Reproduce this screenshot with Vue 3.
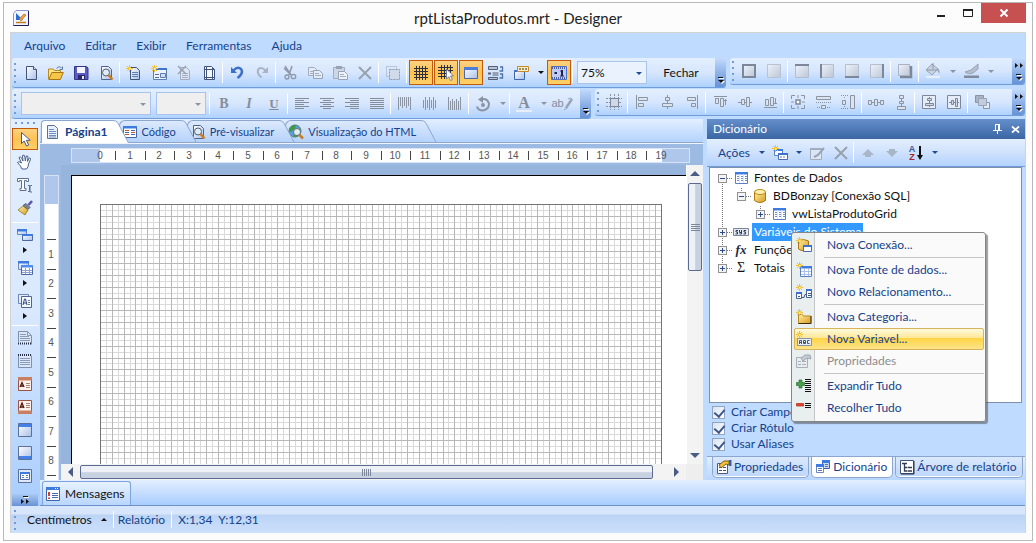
<script setup>
const fileTools = [
  { i: 'new', l: 'Novo' }, { i: 'open', l: 'Abrir' }, { i: 'save', l: 'Salvar' }, { i: 'preview', l: 'Visualizar' }, { t: 'sep' },
  { i: 'newpage', l: 'Nova página' }, { i: 'newform', l: 'Novo formulário' }, { i: 'delpage', l: 'Excluir página' }, { i: 'setup', l: 'Configurar página' }, { t: 'sep' },
  { i: 'undo', l: 'Desfazer' }, { i: 'redo', l: 'Refazer' }, { t: 'sep' },
  { i: 'cut', l: 'Recortar' }, { i: 'copy', l: 'Copiar' }, { i: 'paste', l: 'Colar' }, { i: 'del', l: 'Excluir' }, { t: 'sep' },
  { i: 'selall', l: 'Selecionar tudo' }, { t: 'sep' },
  { i: 'grid', l: 'Grade', on: true }, { i: 'snap', l: 'Alinhar à grade', on: true }, { i: 'window', l: 'Cabeçalhos', on: true },
  { i: 'order', l: 'Ordem' }, { i: 'tag', l: 'Exibição', drop: true }, { i: 'ruler', l: 'Réguas', on: true }, { t: 'sep' }
]
const borderTools = [
  { i: 'b-all', l: 'Todas as bordas' }, { i: 'b-none', l: 'Sem bordas' }, { t: 'sep' },
  { i: 'b-top', l: 'Borda superior' }, { i: 'b-left', l: 'Borda esquerda' }, { i: 'b-bottom', l: 'Borda inferior' }, { i: 'b-right', l: 'Borda direita' }, { t: 'sep' },
  { i: 'b-shadow', l: 'Sombra' }, { t: 'sep' }, { i: 'bucket', l: 'Cor de fundo', drop: true }, { i: 'pen', l: 'Cor da borda', drop: true }
]
const textTools = [
  { t: 'sep' }, { g: 'B', i: 'bold', l: 'Negrito' }, { g: 'I', i: 'italic', l: 'Itálico' }, { g: 'U', i: 'under', l: 'Sublinhado' }, { t: 'sep' },
  { i: 'al-left', l: 'Esquerda' }, { i: 'al-center', l: 'Centro' }, { i: 'al-right', l: 'Direita' }, { i: 'al-just', l: 'Justificar' }, { t: 'sep' },
  { i: 'va-top', l: 'Topo' }, { i: 'va-mid', l: 'Meio' }, { i: 'va-bot', l: 'Base' }, { t: 'sep' },
  { i: 'rotate', l: 'Rotação', drop: true }, { t: 'sep' }, { g: 'A', i: 'fontcolor', l: 'Cor do texto', drop: true }, { g: 'ab', i: 'format', l: 'Formato', after: 'quill' }
]
const layoutTools = [
  { i: 'l-grid', l: 'Ajustar à grade' }, { t: 'sep' },
  { i: 'l-left', l: 'Alinhar à esquerda' }, { i: 'l-center', l: 'Centralizar' }, { i: 'l-right', l: 'Alinhar à direita' }, { t: 'sep' },
  { i: 'l-top', l: 'Alinhar topo' }, { i: 'l-mid', l: 'Alinhar meio' }, { i: 'l-bot', l: 'Alinhar base' }, { t: 'sep' },
  { i: 'l-size', l: 'Mesmo tamanho' }, { i: 'l-width', l: 'Mesma largura' }, { i: 'l-height', l: 'Mesma altura' }, { t: 'sep' },
  { i: 'l-hsp', l: 'Espaço horizontal' }, { i: 'l-vsp', l: 'Espaço vertical' }, { t: 'sep' },
  { i: 'l-hc', l: 'Centro horizontal' }, { i: 'l-vc', l: 'Centro vertical' }, { t: 'sep' }, { i: 'l-front', l: 'Trazer para frente' }
]
const boxTools = [
  { i: 'cursor', l: 'Selecionar', on: true }, { i: 'hand', l: 'Mover' }, { i: 'text', l: 'Texto' }, { i: 'brush', l: 'Copiar estilo' }, { t: 'sep' },
  { i: 'bands', l: 'Bandas', drop: true }, { i: 'cross', l: 'Bandas cruzadas', drop: true }, { i: 'comps', l: 'Componentes', drop: true }, { t: 'sep' },
  { i: 'k-title', l: 'Título' }, { i: 'k-sum', l: 'Resumo' }, { i: 'k-phead', l: 'Cabeçalho de página' }, { i: 'k-pfoot', l: 'Rodapé de página' },
  { i: 'k-head', l: 'Cabeçalho' }, { i: 'k-foot', l: 'Rodapé' }, { i: 'k-data', l: 'Dados' }
]
const menus = ['Arquivo', 'Editar', 'Exibir', 'Ferramentas', 'Ajuda']
const tabs = [
  { i: 'doc', l: 'Página1', on: true }, { i: 'code', l: 'Código' }, { i: 'preview', l: 'Pré-visualizar' }, { i: 'globe', l: 'Visualização do HTML' }
]
const tree = [
  { d: 0, open: true, i: 'table', l: 'Fontes de Dados' },
  { d: 1, open: true, i: 'db', l: 'BDBonzay [Conexão SQL]' },
  { d: 2, i: 'table', l: 'vwListaProdutoGrid' },
  { d: 0, i: 'sys', l: 'Variáveis do Sistema', sel: true },
  { d: 0, i: 'fx', g: 'fx', l: 'Funções' },
  { d: 0, i: 'sigma', g: 'Σ', l: 'Totais' }
]
const context = [
  { i: 'n-conn', l: 'Nova Conexão...' }, { t: 'sep' },
  { i: 'n-table', l: 'Nova Fonte de dados...' }, { i: 'n-rel', l: 'Novo Relacionamento...' }, { t: 'sep' },
  { i: 'n-cat', l: 'Nova Categoria...' }, { i: 'n-var', l: 'Nova Variavel...', on: true }, { i: 'props-off', l: 'Propriedades', off: true }, { t: 'sep' },
  { i: 'expand', l: 'Expandir Tudo' }, { i: 'collapse', l: 'Recolher Tudo' }
]
const options = ['Criar Campo', 'Criar Rótulo', 'Usar Aliases']
const dockTabs = [
  { i: 'props', l: 'Propriedades' }, { i: 'dict', l: 'Dicionário', on: true }, { i: 'tree', l: 'Árvore de relatório' }
]

const cm = 561 / 19
const hMarks = Array.from({ length: 20 }, (_, n) => ({ n, x: 29 + Math.round(n * cm) }))
const vMarks = Array.from({ length: 8 }, (_, n) => ({ n: n + 1, y: 50 + Math.round((n + 1) * cm) }))
const steps = (count) => Array.from({ length: count }, (_, n) => ({ p: Math.round((n + 1) * cm / 5), dark: n % 2 === 1 }))
const cols = steps(94)
const rows = steps(250)
</script>

<template>
  <svg class="defs" aria-hidden="true">
    <defs>
      <linearGradient id="gBlue" x1="0" y1="0" x2="1" y2="1"><stop offset="0" stop-color="#fff" /><stop offset="1" stop-color="#a9c0e8" /></linearGradient>
      <linearGradient id="gGray" x1="0" y1="0" x2="1" y2="1"><stop offset="0" stop-color="#eef3fb" /><stop offset="1" stop-color="#bcc6d6" /></linearGradient>
      <linearGradient id="gGold" x1="0" y1="0" x2="1" y2="1"><stop offset="0" stop-color="#fff0a8" /><stop offset="1" stop-color="#d79a1c" /></linearGradient>
      <linearGradient id="gTab" x1="0" y1="0" x2="0" y2="1"><stop offset="0" stop-color="#dce9fc" /><stop offset="1" stop-color="#b5d2fb" /></linearGradient>
    </defs>
    <g id="spark"><path d="M3.500 0v7M0 3.500h7M1 1l5 5M6 1l-5 5" stroke="#f0c030" /><path d="M3 3h1.500v1.500h-1.500z" fill="#fffbd8" /></g>
    <symbol id="logo" viewBox="0 0 16 16"><path d="M3 .5h12.500v15h-15v-12z" fill="#f4f6fd" stroke="#8c93cc" /><path d="M15.500 1v14.500h-15" fill="none" stroke="#1d1b5c" /><path d="M3 3v7h7z" fill="#2b6fd4" /><path d="M6 9l5-5 2 1-5 6z" fill="#f0a040" stroke="#a85c10" stroke-width=".6" /><path d="M3 12.500h10" stroke="#c07818" stroke-width="1.500" /></symbol>
    <symbol id="new" viewBox="0 0 16 16"><path d="M3.500 1.500h7l3 3v10h-10z" fill="url(#gBlue)" stroke="#41557c" /><path d="M10.500 1.500v3h3" fill="#dfe7f5" stroke="#41557c" /></symbol>
    <symbol id="open" viewBox="0 0 16 16"><path d="M.5 14v-10h5l1 1.500h6v3" fill="#fbe58c" stroke="#b98a1e" /><path d="M.8 14.500l3-7h11.500l-3 7z" fill="#f6c648" stroke="#a87612" /><path d="M8.500 3.500q3-3.500 5.500 0M14.500 1.500v3h-3" fill="none" stroke="#5f7ba8" /></symbol>
    <symbol id="save" viewBox="0 0 16 16"><path d="M1.500 1.500h12l1.500 1.500v11.500h-13.500z" fill="#5a5bc4" stroke="#34358e" /><path d="M4 2h8v6h-8z" fill="#f1f4fe" /><path d="M5 10h7v4.500h-7z" fill="#2a2a66" /><path d="M9 11h2v3h-2z" fill="#e8ecfa" /></symbol>
    <symbol id="preview" viewBox="0 0 16 16"><path d="M3.500 1.500h7l3 3v10h-10z" fill="url(#gBlue)" stroke="#51658c" /><circle cx="8" cy="7.500" r="3.500" fill="#dcecfa" stroke="#555f6e" /><path d="M10.500 10l4 4.500" stroke="#d17a1c" stroke-width="2.500" /></symbol>
    <symbol id="newpage" viewBox="0 0 16 16"><path d="M4.500 2.500h6l3 3v9h-9z" fill="url(#gBlue)" stroke="#41557c" /><path d="M6 7.500h6M6 9.500h6M6 11.500h6" stroke="#5d7fb4" /><use href="#spark" /></symbol>
    <symbol id="newform" viewBox="0 0 16 16"><path d="M2.500 3.500h13v11h-13z" fill="#eef4fe" stroke="#5d7fb4" /><path d="M2 3h14v2h-14z" fill="#3f73cc" /><path d="M4 9.500h4M4 12.500h4" stroke="#5d6f94" /><path d="M9.500 8.500h5v4h-5z" fill="#cfdff8" stroke="#5d7fb4" /><use href="#spark" /></symbol>
    <symbol id="delpage" viewBox="0 0 16 16"><path d="M4.500 2.500h6l3 3v9h-9z" fill="#dce6f4" stroke="#a2adbf" /><path d="M6 8.500h6M6 10.500h6M6 12.500h6" stroke="#a2adbf" /><path d="M2 1l8 8M10 1l-8 8" stroke="#98a2b2" stroke-width="1.500" /></symbol>
    <symbol id="setup" viewBox="0 0 16 16"><path d="M3.500 1.500h7l3 3v10h-10z" fill="#f4f8fe" stroke="#41557c" /><path d="M5.500 1.500v13M11.500 2v12.500M3.500 4.500h10M3.500 12.500h10" stroke="#41557c" /></symbol>
    <symbol id="undo" viewBox="0 0 16 16"><path d="M2 2v6h6z" fill="#3d70cb" /><path d="M4.500 5.500q4-4.500 7.500-1.500 3 4-3.500 9" fill="none" stroke="#3d70cb" stroke-width="2.500" /></symbol>
    <symbol id="redo" viewBox="0 0 16 16"><path d="M14 2v6h-6z" fill="#a9b3c3" /><path d="M11.500 5.500q-4-4-7-1.500-2.500 4 3 8.500" fill="none" stroke="#a9b3c3" stroke-width="2" /></symbol>
    <symbol id="cut" viewBox="0 0 16 16"><path d="M3 1l6 9M10 1l-3 9M2 3l5 5" stroke="#8d98aa" stroke-width="1.500" /><circle cx="5" cy="12" r="2" fill="none" stroke="#8d98aa" stroke-width="1.300" /><circle cx="11.500" cy="11.500" r="2.200" fill="none" stroke="#8d98aa" stroke-width="1.300" /></symbol>
    <symbol id="copy" viewBox="0 0 16 16"><path d="M1.500 2.500h6l2 2v6h-8z" fill="#e3ebf8" stroke="#a2adbf" /><path d="M3 6.500h4M3 8.500h4" stroke="#a2adbf" /><path d="M6.500 5.500h6l3 3v5h-9z" fill="#e3ebf8" stroke="#98a3b5" /><path d="M8 8.500h4M8 10.500h6" stroke="#a2adbf" /></symbol>
    <symbol id="paste" viewBox="0 0 16 16"><path d="M1.500 2.500h11v11h-11z" fill="#ccd6e4" stroke="#a2adbf" /><path d="M4 1h6v3h-6z" fill="#98a3b5" /><path d="M6.500 6.500h6l3 3v5h-9z" fill="#edf2fa" stroke="#98a3b5" /><path d="M8 9.500h4M8 11.500h6" stroke="#a2adbf" /></symbol>
    <symbol id="del" viewBox="0 0 16 16"><path d="M2 2l12 12M14 2l-12 12" stroke="#98a1ae" stroke-width="2" /></symbol>
    <symbol id="selall" viewBox="0 0 16 16"><path d="M1.500 1.500h10v10h-10z" fill="none" stroke="#9aa4b5" stroke-dasharray="1 1" /><path d="M4.500 4.500h10v10h-10z" fill="#d0dae8" stroke="#8d98aa" stroke-dasharray="2 1" /></symbol>
    <symbol id="grid" viewBox="0 0 16 16"><path d="M3.500 1v14M6.500 1v14M9.500 1v14M12.500 1v14M1 3.500h14M1 6.500h14M1 9.500h14M1 12.500h14" stroke="#2c2f38" /></symbol>
    <symbol id="snap" viewBox="0 0 16 16"><path d="M3.500 0v14M6.500 0v14M9.500 0v8M12.500 0v8M0 2.500h15M0 5.500h15M0 8.500h9M0 11.500h8" stroke="#2c2f38" /><path d="M8.500 4v10l2.300-2.300 1.700 3.800 1.800-1-1.800-3.500h3z" fill="#fff" stroke="#5a6b90" stroke-width=".8" /></symbol>
    <symbol id="window" viewBox="0 0 16 16"><path d="M1.500 2.500h13v11h-13z" fill="url(#gBlue)" stroke="#4d68a4" /><path d="M1 2h14v3h-14z" fill="#4a7ce0" /></symbol>
    <symbol id="order" viewBox="0 0 16 16"><path d="M.5 1.500h9v3h-9z" fill="#b9c4d8" stroke="#555f73" /><path d="M4.500 8h6M4.500 10h6" stroke="#555f73" /><path d="M0 7.500h3v2h-3z" fill="#555f73" /><path d="M.5 12.500h9v2h-9z" fill="#b9c4d8" stroke="#555f73" /><path d="M12 2h2.500v4h-3M12 9h2.500v4h-3" fill="none" stroke="#4a6fae" stroke-width="1.300" /></symbol>
    <symbol id="tag" viewBox="0 0 16 16"><path d="M1.500 5.500h10v9h-10z" fill="url(#gBlue)" stroke="#3e66ad" /><path d="M1 5h11v2h-11z" fill="#3f73cc" /><path d="M4.500 1.500h11v5h-11z" fill="#fdf0c6" stroke="#c58b2a" /><path d="M6 4h2M9 4h2M12 4h2" stroke="#7a6a4a" stroke-width="1.500" /></symbol>
    <symbol id="ruler" viewBox="0 0 16 16"><path d="M.5 1.500h15v13h-15z" fill="#bccbf8" stroke="#4a72cc" /><path d="M1 3h14M1 13h14" stroke="#52629c" stroke-width="2" stroke-dasharray="1 1" /><path d="M3.500 7h2.500v2h-2.500zM10 5h2v5.500h1v1h-4v-1h1v-4h-1z" fill="#1d2450" /></symbol>
    <symbol id="b-all" viewBox="0 0 16 16"><path d="M2 2h12v12h-12z" fill="url(#gGray)" stroke="#7d879a" stroke-width="2" /></symbol>
    <symbol id="b-none" viewBox="0 0 16 16"><path d="M1.500 1.500h13v13h-13z" fill="url(#gGray)" stroke="#b9c3d3" /></symbol>
    <symbol id="b-top" viewBox="0 0 16 16"><path d="M1.500 2.500h13v12h-13z" fill="url(#gGray)" stroke="#b4bece" /><path d="M1 2h14" stroke="#7d879a" stroke-width="2" /></symbol>
    <symbol id="b-left" viewBox="0 0 16 16"><path d="M1.500 1.500h13v13h-13z" fill="url(#gGray)" stroke="#b4bece" /><path d="M2 1v14" stroke="#7d879a" stroke-width="2" /></symbol>
    <symbol id="b-bottom" viewBox="0 0 16 16"><path d="M1.500 1.500h13v12h-13z" fill="url(#gGray)" stroke="#b4bece" /><path d="M1 14h14" stroke="#7d879a" stroke-width="2" /></symbol>
    <symbol id="b-right" viewBox="0 0 16 16"><path d="M1.500 1.500h13v13h-13z" fill="url(#gGray)" stroke="#b4bece" /><path d="M14 1v14" stroke="#7d879a" stroke-width="2" /></symbol>
    <symbol id="b-shadow" viewBox="0 0 16 16"><path d="M3 14h11v-11" fill="none" stroke="#7d879a" stroke-width="2.500" /><path d="M1.500 1.500h11v11h-11z" fill="url(#gGray)" stroke="#aab4c5" /></symbol>
    <symbol id="bucket" viewBox="0 0 16 16"><path d="M7 1l6 5-6 6-6-5z" fill="#c9d2e0" stroke="#98a3b5" /><path d="M2 7h10M8 0v6" stroke="#8d98aa" /><path d="M12 5q3 1 2.500 6l-2-3z" fill="#98a3b5" /><path d="M1 13h14v2h-14z" fill="#e8eef8" /></symbol>
    <symbol id="pen" viewBox="0 0 16 16"><path d="M15 1l-7 6-6 2q3 3 8 1l5-4z" fill="#b5bfcf" stroke="#98a3b5" /><path d="M1 12.500h15v2.500h-15z" fill="#7f8a9c" /></symbol>
    <symbol id="al-left" viewBox="0 0 16 16"><path d="M1 2.500h14M1 4.500h9M1 6.500h14M1 8.500h9M1 10.500h14M1 12.500h9" stroke="#858d9b" /></symbol>
    <symbol id="al-center" viewBox="0 0 16 16"><path d="M1 2.500h14M4 4.500h8M1 6.500h14M4 8.500h8M1 10.500h14M4 12.500h8" stroke="#858d9b" /></symbol>
    <symbol id="al-right" viewBox="0 0 16 16"><path d="M1 2.500h14M6 4.500h9M1 6.500h14M6 8.500h9M1 10.500h14M6 12.500h9" stroke="#858d9b" /></symbol>
    <symbol id="al-just" viewBox="0 0 16 16"><path d="M1 2.500h14M1 4.500h14M1 6.500h14M1 8.500h14M1 10.500h14M1 12.500h14" stroke="#858d9b" /></symbol>
    <symbol id="va-top" viewBox="0 0 16 16"><path d="M1.500 1v13M3.500 1v9M5.500 1v11M7.500 1v9M9.500 1v11M11.500 1v9M13.500 1v13" stroke="#8b94a3" /></symbol>
    <symbol id="va-mid" viewBox="0 0 16 16"><path d="M1.500 4v8M3.500 1v13M5.500 4v8M7.500 1v13M9.500 4v8M11.500 1v13M13.500 4v8" stroke="#8b94a3" /></symbol>
    <symbol id="va-bot" viewBox="0 0 16 16"><path d="M1.500 1v13M3.500 5v9M5.500 3v11M7.500 5v9M9.500 3v11M11.500 5v9M13.500 1v13" stroke="#8b94a3" /></symbol>
    <symbol id="rotate" viewBox="0 0 16 16"><path d="M6 3.500q6-2 8 4 0 6-6 7-5 0-6-4" fill="none" stroke="#8b94a3" stroke-width="2" /><path d="M8 0v7l-5-3.500z" fill="#8b94a3" /><circle cx="8" cy="9" r="2" fill="#8b94a3" /></symbol>
    <symbol id="quill" viewBox="0 0 9 16"><path d="M8 3l-6 9" stroke="#98a3b5" stroke-width="2.500" /><path d="M0 14l3-2M4 3q3-2 4 0" stroke="#98a3b5" fill="none" /></symbol>
    <symbol id="l-grid" viewBox="0 0 16 16"><path d="M4.500 0v16M8.500 0v4M8.500 12v4M12.500 0v16M0 4.500h16M0 8.500h4M13 8.500h3M0 12.500h16" stroke="#8b94a3" stroke-dasharray="2 1" /><path d="M4.500 4.500h8v8h-8z" fill="#cfd8e6" stroke="#7d8799" /></symbol>
    <symbol id="l-left" viewBox="0 0 16 16"><path d="M2.500 1v14" stroke="#8b94a3" /><path d="M4.500 3.500h9v3h-9zM4.500 9.500h5v3h-5z" fill="#dbe3ef" stroke="#8b94a3" /></symbol>
    <symbol id="l-center" viewBox="0 0 16 16"><path d="M8.500 1v14" stroke="#8b94a3" /><path d="M6.500 3.500h4v3h-4zM3.500 9.500h10v3h-10z" fill="#dbe3ef" stroke="#8b94a3" /></symbol>
    <symbol id="l-right" viewBox="0 0 16 16"><path d="M13.500 1v14" stroke="#8b94a3" /><path d="M3.500 3.500h8v3h-8zM7.500 9.500h4v3h-4z" fill="#dbe3ef" stroke="#8b94a3" /></symbol>
    <symbol id="l-top" viewBox="0 0 16 16"><path d="M2 2.500h13M13.500 5v6M12 6.500h3" stroke="#8b94a3" /><path d="M3.500 4.500h3v5h-3zM8.500 4.500h3v8h-3z" fill="#dbe3ef" stroke="#8b94a3" /></symbol>
    <symbol id="l-mid" viewBox="0 0 16 16"><path d="M1 8.500h14" stroke="#8b94a3" /><path d="M4.500 5.500h3v5h-3zM9.500 3.500h3v9h-3z" fill="#dbe3ef" stroke="#8b94a3" /></symbol>
    <symbol id="l-bot" viewBox="0 0 16 16"><path d="M2 13.500h13M13.500 4v6M12 9.500h3" stroke="#8b94a3" /><path d="M3.500 5.500h3v6h-3zM8.500 3.500h3v8h-3z" fill="#dbe3ef" stroke="#8b94a3" /></symbol>
    <symbol id="l-size" viewBox="0 0 16 16"><path d="M5 1.500h-3.500v3.500M11 1.500h3.500v3.500M5 14.500h-3.500v-3.500M11 14.500h3.500v-3.500M1 8h3M12 8h3M8 1v3M8 12v3" fill="none" stroke="#8b94a3" /><path d="M6 6h4v4h-4z" fill="#fff" stroke="#7d8799" stroke-width="1.500" /></symbol>
    <symbol id="l-width" viewBox="0 0 16 16"><path d="M1.500 2.500h14v3h-14zM6.500 11.500h4v3h-4z" fill="#dbe3ef" stroke="#8b94a3" /><path d="M1 8.500h15M2 13.500h3M12 13.500h3" stroke="#8b94a3" stroke-dasharray="1 1" /></symbol>
    <symbol id="l-height" viewBox="0 0 16 16"><path d="M10.500 1.500h4v13h-4zM2.500 6.500h3v4h-3z" fill="#dbe3ef" stroke="#8b94a3" /><path d="M1 1.500h8M1 14.500h8M4.500 3v2M4.500 12v2" stroke="#8b94a3" stroke-dasharray="1 1" /></symbol>
    <symbol id="l-hsp" viewBox="0 0 16 16"><path d="M.5 6.500h3v4h-3zM6.500 5.500h3v6h-3zM12.500 6.500h3v4h-3z" fill="#dbe3ef" stroke="#8b94a3" /><path d="M4 8.500h2M10 8.500h2" stroke="#8b94a3" /></symbol>
    <symbol id="l-vsp" viewBox="0 0 16 16"><path d="M6.500 1.500h4v3h-4zM4.500 12.500h8v3h-8zM6.500 7.500h4v2h-4z" fill="#dbe3ef" stroke="#8b94a3" /><path d="M8.500 5v2M8.500 10v2" stroke="#8b94a3" /></symbol>
    <symbol id="l-hc" viewBox="0 0 16 16"><path d="M1.500 1.500h13v13h-13z" fill="#e4ecf8" stroke="#7d8799" /><path d="M8.500 3v10" stroke="#7d8799" /><path d="M6.500 4.500h4v2h-4zM4.500 9.500h8v2h-8z" fill="#cfd8e6" stroke="#7d8799" /></symbol>
    <symbol id="l-vc" viewBox="0 0 16 16"><path d="M1.500 1.500h13v13h-13z" fill="#e4ecf8" stroke="#7d8799" /><path d="M3 8.500h10" stroke="#7d8799" /><path d="M5.500 6.500v4h2v-4zM9.500 4.500v8h2v-8z" fill="#cfd8e6" stroke="#7d8799" /></symbol>
    <symbol id="l-front" viewBox="0 0 16 16"><path d="M1.500 1.500h8v7h-8z" fill="#a9b3c3" stroke="#8b94a3" /><path d="M9.500 8.500h6v6h-6z" fill="#e4ecf8" stroke="#8b94a3" /><path d="M4.500 4.500h8v7h-8z" fill="#c3ccda" stroke="#98a3b5" /></symbol>
    <symbol id="cursor" viewBox="0 0 16 16"><path d="M4.500 1.500v11l2.700-2.500 2.300 5 2.200-1-2.300-4.700h3.800z" fill="#fff" stroke="#4a5a80" /></symbol>
    <symbol id="hand" viewBox="0 0 16 16"><path d="M5 15q-1-3-4.500-6.500 1-2 4 .5l-2.500-5.500q1.500-1.500 2.500.5l1.500 3-.5-5.500q2-1 2.200.5l.6 5 1-5q1.700-.5 1.700 1l-.6 4.500 2-3.500q1.600 0 1.100 1.500l-2 4.500q0 3-2 5z" fill="#fff" stroke="#4a5f8c" /></symbol>
    <symbol id="text" viewBox="0 0 16 16"><path d="M.5 1.500h11v3h-2v-1h-2v8h1.500v2h-6v-2h1.500v-8h-2v1h-2z" fill="#fff" stroke="#5c6e94" /><path d="M11 8.500h1.500v6h-1.500M15 8.500h-1.500M13 8v7M15 15h-2" fill="none" stroke="#5c6e94" /></symbol>
    <symbol id="brush" viewBox="0 0 16 16"><path d="M15 1l-3.500 4" stroke="#5b55a8" stroke-width="2.500" /><path d="M9 3.500l4 4-2 2-5-4z" fill="#7d8496" stroke="#596070" /><path d="M6 6l5 4-3 5-7-5z" fill="url(#gGold)" stroke="#7a6a24" stroke-width=".7" /></symbol>
    <symbol id="bands" viewBox="0 0 16 16"><path d="M.5 2.500h9v5h-9z" fill="url(#gBlue)" stroke="#6b87bd" /><path d="M0 2h10v2.500h-10z" fill="#3d7be0" /><path d="M5.500 7.500h10v6h-10z" fill="url(#gBlue)" stroke="#4d68a4" /><path d="M5 7h11v2h-11z" fill="#3d7be0" /></symbol>
    <symbol id="cross" viewBox="0 0 16 16"><path d="M1.500 1.500h10v8h-10z" fill="url(#gBlue)" stroke="#6b87bd" /><path d="M1 1h11v2.500h-11z" fill="#3d7be0" /><path d="M4.500 5.500h11v9h-11z" fill="#fff" stroke="#4d68a4" /><path d="M4 5h12v2.500h-12z" fill="#4f8df0" /><path d="M8.500 8v6M12.500 8v6M5 10.500h10M5 12.500h10" stroke="#8ba3cf" /></symbol>
    <symbol id="comps" viewBox="0 0 16 16"><path d="M1.500 1.500h10v9h-10z" fill="#e6eefb" stroke="#6b87bd" /><path d="M4.500 3.500h10v11h-10z" fill="#f3f7fe" stroke="#51658c" /><path d="M6 12l1.500-6h1l1.500 6M6.500 10h3" stroke="#2e437c" fill="none" /><path d="M11 7.500h2M11 9.500h2M11 11.500h2" stroke="#5d7fb4" /></symbol>
    <symbol id="k-title" viewBox="0 0 16 16"><path d="M1.500 12v-10.500h9l4 4v9" fill="#dce6f6" stroke="#7d90b0" /><path d="M10.500 1.500v4h4M3 4.500h6M3 6.500h9M3 8.500h10M3 10.500h10" fill="none" stroke="#8a9cbb" /><path d="M1 13.500h14" stroke="#26304a" stroke-dasharray="1 1" stroke-width="2" /></symbol>
    <symbol id="k-sum" viewBox="0 0 16 16"><path d="M1.500 2.500v12h13v-12" fill="#dce6f6" stroke="#7d90b0" /><path d="M3 5.500h10M3 7.500h10M3 9.500h10M3 11.500h10" stroke="#8a9cbb" /><path d="M1 2h14" stroke="#26304a" stroke-dasharray="1 1" stroke-width="2" /></symbol>
    <symbol id="k-phead" viewBox="0 0 16 16"><path d="M1.500 1.500h13v13h-13z" fill="#fdf3ee" stroke="#9c5340" /><path d="M1 1h14v3.500h-14z" fill="#c87f62" /><path d="M3 11l2-4.500 2 4.500M3.500 10h3" fill="none" stroke="#4e1b12" stroke-width="1.300" /><path d="M9 7.500h4M9 9.500h4M9 11.500h4" stroke="#b28372" /></symbol>
    <symbol id="k-pfoot" viewBox="0 0 16 16"><path d="M1.500 1.500h13v13h-13z" fill="#fdf3ee" stroke="#9c5340" /><path d="M1 11.500h14v3.500h-14z" fill="#c87f62" /><path d="M3 9l2-5 2 5M3.500 8h3" fill="none" stroke="#4e1b12" stroke-width="1.300" /><path d="M9 4.500h4M9 6.500h4M9 8.500h4" stroke="#b28372" /></symbol>
    <symbol id="k-head" viewBox="0 0 16 16"><path d="M1.500 1.500h13v13h-13z" fill="url(#gBlue)" stroke="#5c7097" /><path d="M2 2h12v3h-12z" fill="#4480e8" /></symbol>
    <symbol id="k-foot" viewBox="0 0 16 16"><path d="M1.500 1.500h13v13h-13z" fill="url(#gBlue)" stroke="#5c7097" /><path d="M2 11h12v3h-12z" fill="#4480e8" /></symbol>
    <symbol id="k-data" viewBox="0 0 16 16"><path d="M1.500 1.500h13v13h-13z" fill="#dde8f8" stroke="#5c7097" /><path d="M3.500 4.500h9v7h-9z" fill="#fff" stroke="#4d68a4" /><path d="M3 4h10v2h-10z" fill="#3d7be0" /><path d="M5 7.500h2M9 7.500h2M5 9.500h2M9 9.500h2" stroke="#5d7fb4" /></symbol>
    <symbol id="doc" viewBox="0 0 16 16"><path d="M3.500 1.500h7l3 3v10h-10z" fill="#e8f0fb" stroke="#5c7097" /><path d="M5 5.500h5M5 7.500h7M5 9.500h7M5 11.500h7M5 13h7" stroke="#6f8fc2" /></symbol>
    <symbol id="code" viewBox="0 0 16 16"><path d="M1.500 2.500h13v11h-13z" fill="#fff" stroke="#3e66ad" /><path d="M1 2h14v2.500h-14z" fill="#3d7be0" /><path d="M3 6.500h4M9 8.500h4M3 10.500h4" stroke="#c8553a" /><path d="M9 6.500h4M3 8.500h4M9 10.500h4" stroke="#4a67b0" /></symbol>
    <symbol id="globe" viewBox="0 0 16 16"><circle cx="7" cy="7" r="6" fill="#5b9de0" stroke="#527a5a" /><path d="M2 4q3-4 6-2.500l-1 3-4 3.500q-2-1-1-4zM5 12l3-3 2 1-2 3z" fill="#3f9a4a" /><circle cx="9" cy="8" r="3.500" fill="#dff0f4" stroke="#607078" /><path d="M11.500 11l3.500 3.500" stroke="#d17a1c" stroke-width="2.500" /></symbol>
    <symbol id="table" viewBox="0 0 16 16"><path d="M2.500 2.500h12v11h-12z" fill="#fff" stroke="#5d7fc0" /><path d="M2 2h13v2.500h-13z" fill="#3d7be0" /><path d="M6.500 4v9M10.500 4v9" stroke="#dbe6f8" /><path d="M4 6.500h2M8 6.500h2M12 6.500h2M4 8.500h2M8 8.500h2M12 8.500h2M4 10.500h2M8 10.500h2M12 10.500h2" stroke="#6d8fcc" /></symbol>
    <symbol id="db" viewBox="0 0 16 16"><path d="M2.500 4v8.500q5.500 4 11 0v-8.500" fill="url(#gGold)" stroke="#a87612" /><ellipse cx="8" cy="4" rx="5.500" ry="2.500" fill="#fdf0b0" stroke="#b98a1e" /></symbol>
    <symbol id="sys" viewBox="0 0 16 16"><path d="M.5 4.500h15v7h-15z" fill="#e4eaf3" stroke="#7b8799" /><path d="M5 6.500h-2v1.500h1.500v2h-2M6.500 6v2.500h2v-2.500M8.500 8v2h-2M13 6.500h-2v1.500h1.500v2h-2" fill="none" stroke="#333c50" /></symbol>
    <symbol id="n-conn" viewBox="0 0 16 16"><path d="M2.500 4v8q5 3.500 10 0v-8q-5-3-10 0" fill="url(#gGold)" stroke="#a87612" /><path d="M7.500 8.500h8v6h-8z" fill="#fff" stroke="#4d6aae" /><path d="M7 8h9v2h-9z" fill="#3d6fd0" /><use href="#spark" /></symbol>
    <symbol id="n-table" viewBox="0 0 16 16"><path d="M4.500 4.500h11v10h-11z" fill="#fff" stroke="#5d7fc0" /><path d="M4 4h12v2.500h-12z" fill="#3d7be0" /><path d="M8.500 7v7M12.500 7v7M5 9.500h10M5 12.500h10" stroke="#a9c0ea" /><use href="#spark" /></symbol>
    <symbol id="n-rel" viewBox="0 0 16 16"><path d="M.5 8.500h5v6h-5zM10.500 5.500h5v8h-5z" fill="#fff" stroke="#41639f" /><path d="M0 8h6v2h-6zM10 5h6v2h-6z" fill="#3d6fd0" /><path d="M6 13.500h2l1-3h1M12 9.500h3M12 11.500h3M2 12.500h2" fill="none" stroke="#41557c" /><use href="#spark" /></symbol>
    <symbol id="n-cat" viewBox="0 0 16 16"><path d="M2.500 14.500v-9h4l1 1.500h7.500v7.500z" fill="url(#gGold)" stroke="#b98a1e" /><path d="M15 7v7.500h-12.500" fill="none" stroke="#3c3010" /><use href="#spark" /></symbol>
    <symbol id="n-var" viewBox="0 0 16 16"><path d="M1.500 7.500h14v7h-14z" fill="#e8eef6" stroke="#8793a8" /><path d="M3.500 13v-3.500h2v3.500M3.500 11.500h2M7.500 9.500v3h2v-3zM7.500 11.500h2M13.500 9.500h-2v3h2" fill="none" stroke="#4a5468" /><use href="#spark" /></symbol>
    <symbol id="props-off" viewBox="0 0 16 16"><path d="M.5 4.500h11v10h-11z" fill="#e8ebef" stroke="#a9afb8" /><path d="M2 8.500h3M6 8.500h4M2 11.500h3M6 11.500h4" stroke="#a9afb8" /><path d="M5 5l4-3h5l1 4-4-1-4 3z" fill="#c6cbd2" stroke="#a0a7b1" /></symbol>
    <symbol id="props" viewBox="0 0 16 16"><path d="M1.500 4.500h10v10h-10z" fill="#fff" stroke="#4f5d78" /><path d="M3 8.500h3M7 8.500h3M3 11.500h3M7 11.500h3" stroke="#41557c" /><path d="M3 6l5-4h5v4l-3-1-5 4z" fill="#f3bd3c" stroke="#7d5c14" /><path d="M13 1h2.500v6h-2.500z" fill="#2e62b8" /></symbol>
    <symbol id="dict" viewBox="0 0 16 16"><path d="M7.500 1.500h7v8h-7z" fill="#c9daf6" stroke="#41639f" /><path d="M7 1h8v3h-8z" fill="#3d7be0" /><path d="M1.500 5.500h7v8h-7z" fill="#fff" stroke="#6b87bd" /><path d="M1 5h8v3h-8z" fill="#3d7be0" /><path d="M3 9.500h4M3 11.500h4M10 5.500h3M10 7.500h3" stroke="#5d76a8" /></symbol>
    <symbol id="tree" viewBox="0 0 16 16"><path d="M1.500 1.500h13v13h-13z" fill="#fff" stroke="#41557c" /><path d="M15 2v13h-13" fill="none" stroke="#26304a" /><path d="M3 4.500h5M5.500 4.500v7.500h3M5.500 8.500h3M9 8.500h4M9 12h4" fill="none" stroke="#333c50" stroke-width="1.300" /></symbol>
    <symbol id="expand" viewBox="0 0 16 16"><path d="M3 2h3v2.500h2.500v3h-2.500v2.500h-3v-2.500h-2.500v-3h2.500z" fill="#4aa04a" stroke="#2d6e34" stroke-width=".7" /><path d="M9 1.500h6M9 3.500h6M9 5.500h6M9 7.500h6M9 9.500h6M9 11.500h6M9 13.500h6" stroke="#111" /></symbol>
    <symbol id="collapse" viewBox="0 0 16 16"><path d="M.5 3.500h7v2.500h-7z" fill="#e8442c" stroke="#b02818" stroke-width=".7" /><path d="M9 3.500h6M9 5.500h6M9 7.500h6" stroke="#111" /></symbol>
    <symbol id="n-dict" viewBox="0 0 16 16"><path d="M2.500 4.500h8v6h-8z" fill="#fff" stroke="#5d7fc0" /><path d="M2 4h9v2h-9z" fill="#3d7be0" /><path d="M6.500 8.500h9v6h-9z" fill="#fff" stroke="#4d6aae" /><path d="M6 8h10v2h-10z" fill="#3d6fd0" /><path d="M8 12h2M11 12h2" stroke="#5d7fc0" /><use href="#spark" /></symbol>
    <symbol id="edit-off" viewBox="0 0 16 16"><path d="M1.500 3.500h11v11h-11z" fill="#dbe6f5" stroke="#a2adbf" /><path d="M1 3h12v2h-12z" fill="#a2adbf" /><path d="M15 3l-6 7-4 2" stroke="#98a3b5" stroke-width="2" fill="none" /></symbol>
    <symbol id="up-off" viewBox="0 0 16 16"><path d="M8 4l6 6h-3v2h-6v-2h-3z" fill="#a9b5c8" /></symbol>
    <symbol id="down-off" viewBox="0 0 16 16"><path d="M8 12l6-6h-3v-2h-6v2h-3z" fill="#a9b5c8" /></symbol>
    <symbol id="msg" viewBox="0 0 16 16"><path d="M1.500 1.500h13v13h-13z" fill="#fff" stroke="#3e66ad" /><path d="M1 1h14v3h-14z" fill="#3d7be0" /><path d="M10 2.500h4" stroke="#fff" stroke-dasharray="1 1" /><path d="M4 6v4M4 11.500v1.500" stroke="#d8402a" stroke-width="2" /><path d="M7 7.500h6M7 9.500h6M7 11.500h6" stroke="#4a67b0" /></symbol>
  </svg>

  <div class="page">
    <div class="frame">
      <header class="title">
        <svg class="ic"><use href="#logo" /></svg>
        <h1>rptListaProdutos.mrt - Designer</h1>
        <div class="winbtns">
          <button aria-label="Minimizar"><svg width="10" height="10"><path d="M1 8h8" stroke="#222" stroke-width="2" /></svg></button>
          <button aria-label="Maximizar"><svg width="10" height="10"><path d="M.5 1.500h9v7h-9z" fill="none" stroke="#222" /><path d="M0 2h10" stroke="#222" stroke-width="2" /></svg></button>
          <button class="close" aria-label="Fechar janela"><svg width="10" height="10"><path d="M1.500 1.500l7 7M8.500 1.500l-7 7" stroke="#fff" stroke-width="2" /></svg></button>
        </div>
      </header>

      <div class="client">
        <nav class="menubar"><button v-for="m in menus" :key="m">{{ m }}</button></nav>

        <div class="bars">
          <div class="bar tall">
            <i class="grip"></i>
            <template v-for="(b, n) in fileTools" :key="n">
              <i v-if="b.t" class="sep"></i>
              <template v-else>
                <button class="tb" :class="{ on: b.on }" :aria-label="b.l"><svg class="ic"><use :href="'#' + b.i" /></svg></button>
                <button v-if="b.drop" class="drop" :aria-label="b.l + ' opções'"><i class="tri"></i></button>
              </template>
            </template>
            <span class="combo zoom"><select aria-label="Zoom"><option>75%</option></select><i class="tri blue"></i></span>
            <button class="fechar">Fechar</button>
            <button class="cap" aria-label="Opções da barra padrão"><i class="line"></i><i class="tri"></i></button>
          </div>
          <div class="bar fill">
            <i class="grip"></i>
            <template v-for="(b, n) in borderTools" :key="n">
              <i v-if="b.t" class="sep"></i>
              <template v-else>
                <button class="tb" :aria-label="b.l"><svg class="ic"><use :href="'#' + b.i" /></svg></button>
                <button v-if="b.drop" class="drop" :aria-label="b.l + ' opções'"><i class="tri gray"></i></button>
              </template>
            </template>
            <button class="cap" aria-label="Mais bordas"><svg class="more" width="8" height="5"><path d="M0 0l3 2.500-3 2.500zM5 0l3 2.500-3 2.500z" /></svg><i class="line"></i><i class="tri"></i></button>
          </div>
        </div>
        <div class="bars">
          <div class="bar tall texts">
            <i class="grip"></i>
            <span class="combo font"><select aria-label="Fonte" disabled><option></option></select><i class="tri gray"></i></span>
            <span class="combo size"><select aria-label="Tamanho" disabled><option></option></select><i class="tri gray"></i></span>
            <template v-for="(b, n) in textTools" :key="n">
              <i v-if="b.t" class="sep"></i>
              <template v-else>
                <button class="tb" :aria-label="b.l">
                  <span v-if="b.g" class="glyph" :class="b.i">{{ b.g }}<svg v-if="b.after" width="9" height="16"><use :href="'#' + b.after" /></svg></span>
                  <svg v-else class="ic"><use :href="'#' + b.i" /></svg>
                </button>
                <button v-if="b.drop" class="drop" :aria-label="b.l + ' opções'"><i class="tri gray"></i></button>
              </template>
            </template>
            <button class="cap" aria-label="Opções de texto"><i class="line"></i><i class="tri"></i></button>
          </div>
          <div class="bar fill">
            <i class="grip"></i>
            <template v-for="(b, n) in layoutTools" :key="n">
              <i v-if="b.t" class="sep"></i>
              <button v-else class="tb" :aria-label="b.l"><svg class="ic"><use :href="'#' + b.i" /></svg></button>
            </template>
            <button class="cap" aria-label="Mais layout"><svg class="more" width="8" height="5"><path d="M0 0l3 2.500-3 2.500zM5 0l3 2.500-3 2.500z" /></svg><i class="line"></i><i class="tri"></i></button>
          </div>
        </div>

        <div class="body">
          <aside class="toolbox">
            <i class="hgrip"></i>
            <template v-for="(b, n) in boxTools" :key="n">
              <i v-if="b.t" class="hsep"></i>
              <button v-else class="kb" :class="{ on: b.on, more: b.drop }" :aria-label="b.l">
                <svg class="ic"><use :href="'#' + b.i" /></svg><i v-if="b.drop" class="side"></i>
              </button>
            </template>
            <button class="boxcap" aria-label="Mais componentes"><i class="line"></i><svg class="more" width="8" height="5"><path d="M0 0l3 2.500-3 2.500zM5 0l3 2.500-3 2.500z" /></svg></button>
          </aside>

          <div class="right">
            <div class="work">
              <main class="center">
                <div class="tabs" role="tablist">
                  <button v-for="(t, n) in tabs" :key="t.l" role="tab" class="tab" :class="{ on: t.on }" :aria-selected="!!t.on" :style="{ zIndex: 9 - n }">
                    <span class="tabmain"><svg class="ic"><use :href="'#' + t.i" /></svg>{{ t.l }}</span>
                    <svg class="tail" width="16" height="23"><path d="M0 .5C4 .5 5 3 6.500 6L15.500 23H0z" :fill="t.on ? '#fff' : 'url(#gTab)'" /><path d="M0 .5C4 .5 5 3 6.500 6L15.500 23" fill="none" stroke="#8ba6cf" /></svg>
                  </button>
                </div>
                <div class="design">
                  <div class="rulerrow">
                    <svg class="hruler" width="619" height="15">
                      <rect width="619" height="15" fill="#d8e4f6" /><rect x="1" y="1" width="617" height="13" fill="#aec7ea" /><rect x="29" y="1" width="562" height="13" fill="#fff" />
                      <g v-for="m in hMarks" :key="m.n">
                        <text :x="m.x" y="11" text-anchor="middle">{{ m.n }}</text>
                        <rect v-if="m.n < 19" :x="m.x + 15" y="3" width="1" height="9" fill="#444" />
                      </g>
                    </svg>
                  </div>
                  <div class="vcol">
                    <svg class="vruler" width="15">
                      <rect width="15" height="1200" fill="#d8e4f6" /><rect x="1" y="1" width="13" height="28" fill="#aec7ea" /><rect x="1" y="29" width="13" height="1170" fill="#fff" />
                      <rect x="3" y="64" width="9" height="1" fill="#444" />
                      <g v-for="m in vMarks" :key="m.n">
                        <text x="7" :y="m.y + 3" text-anchor="middle">{{ m.n }}</text>
                        <rect x="3" :y="m.y + 14" width="9" height="1" fill="#444" />
                      </g>
                    </svg>
                  </div>
                  <div class="canvas">
                    <div class="paper">
                      <svg class="mesh" width="562" shape-rendering="crispEdges">
                        <g v-for="shade in [false, true]" :key="shade">
                          <template v-for="c in cols" :key="'c' + c.p"><rect v-if="c.dark === shade" :x="c.p" y="0" width="1" height="1500" :fill="shade ? '#b8b8b8' : '#dadada'" /></template>
                          <template v-for="r in rows" :key="'r' + r.p"><rect v-if="r.dark === shade" x="0" :y="r.p" width="562" height="1" :fill="shade ? '#b8b8b8' : '#dadada'" /></template>
                        </g>
                        <path d="M.5 1500V.5H561.500V1500" fill="none" stroke="#747474" />
                      </svg>
                    </div>
                  </div>
                  <div class="vscroll">
                    <i class="tri up"></i><div class="vthumb"><i></i></div><i class="tri dn"></i>
                  </div>
                  <div class="hscroll">
                    <i class="lf"></i><div class="hthumb"><i></i></div><i class="side rt"></i>
                  </div>
                  <div class="corner"></div>
                </div>
              </main>

              <section class="panel">
                <header class="ptitle"><h2>Dicionário</h2>
                  <button aria-label="Fixar"><svg width="9" height="10"><path d="M2.500 1v5M6.500 1v5M2 .5h5M0 6.500h9M4.500 7v3M5.500 1v5" stroke="#fff" fill="none" /></svg></button>
                  <button aria-label="Fechar painel"><svg width="9" height="9"><path d="M1 1.500l7 6M8 1.500l-7 6" stroke="#fff" stroke-width="1.800" /></svg></button>
                </header>
                <div class="ptools">
                  <button class="acoes">Ações</button><button class="drop" aria-label="Menu de ações"><i class="tri blue"></i></button>
                  <button class="tb" aria-label="Novo item"><svg class="ic"><use href="#n-dict" /></svg></button><button class="drop" aria-label="Tipos de item"><i class="tri blue"></i></button>
                  <button class="tb" aria-label="Editar item"><svg class="ic"><use href="#edit-off" /></svg></button>
                  <button class="tb" aria-label="Remover item"><svg class="ic"><use href="#del" /></svg></button>
                  <i class="sep"></i>
                  <button class="tb" aria-label="Subir"><svg class="ic"><use href="#up-off" /></svg></button>
                  <button class="tb" aria-label="Descer"><svg class="ic"><use href="#down-off" /></svg></button>
                  <button class="tb az" aria-label="Ordenar"><span class="azl"><b>A</b><b>Z</b></span><svg width="6" height="14"><path d="M2 0h2v9h2l-3 5-3-5h2z" fill="#111" /></svg></button><button class="drop" aria-label="Tipos de ordem"><i class="tri blue"></i></button>
                </div>
                <div class="treebox">
                  <svg class="twigs" width="60" height="110"><path d="M12.500 12v86M31.500 20v8M50.500 38v8" stroke="#777" stroke-dasharray="1 1" /></svg>
                  <ul>
                    <li v-for="r in tree" :key="r.l" :class="'d' + r.d">
                      <button class="exp" :aria-label="(r.open ? 'Recolher ' : 'Expandir ') + r.l"><svg width="9" height="9"><rect x=".5" y=".5" width="8" height="8" fill="#f4f4f4" stroke="#929292" /><path :d="r.open ? 'M2 4.500h5' : 'M2 4.500h5M4.500 2v5'" stroke="#2b4a90" /></svg></button>
                      <i class="dots"></i>
                      <b v-if="r.g" class="ic" :class="r.i">{{ r.g }}</b>
                      <svg v-else class="ic"><use :href="'#' + r.i" /></svg>
                      <span :class="{ sel: r.sel }">{{ r.l }}</span>
                    </li>
                  </ul>
                </div>
                <div class="opts">
                  <label v-for="o in options" :key="o"><input type="checkbox" checked disabled><span>{{ o }}</span></label>
                </div>
                <div class="dock" role="tablist">
                  <button v-for="d in dockTabs" :key="d.l" role="tab" :aria-selected="!!d.on" :class="{ on: d.on }"><svg class="ic"><use :href="'#' + d.i" /></svg>{{ d.l }}</button>
                </div>

                <div class="ctx" role="menu">
                  <template v-for="(c, n) in context" :key="n">
                    <i v-if="c.t" class="csep"></i>
                    <button v-else role="menuitem" :class="{ on: c.on }" :disabled="c.off"><svg class="ic"><use :href="'#' + c.i" /></svg>{{ c.l }}</button>
                  </template>
                </div>
              </section>
            </div>
            <div class="messages"><button><svg class="ic"><use href="#msg" /></svg>Mensagens</button></div>
          </div>
        </div>

        <footer class="status">
          <i class="grip"></i>
          <button class="units">Centímetros<i class="tri up"></i></button>
          <i class="sep"></i><span>Relatório</span><i class="sep"></i><span>X:1,34&nbsp; Y:12,31</span>
        </footer>
      </div>
    </div>
  </div>
</template>

<style>
body { margin: 0; background: #fff; overflow: hidden; }
</style>

<style scoped>
* { box-sizing: border-box; }
.page { height: 100vh; padding: 2px 3px; font: 12px/16px Lato, "Open Sans", sans-serif; color: #15428b; }
button { font: inherit; color: inherit; background: none; border: 0; padding: 0; margin: 0; flex: none; white-space: nowrap; }
i { font-style: normal; flex: none; }
.defs { position: absolute; width: 0; height: 0; }
.ic { width: 16px; height: 16px; display: block; flex: none; }
.frame { height: 100%; border: 1px solid #b9b9b9; background: #fcfcfc; padding: 0 6px 7px; display: flex; flex-direction: column; }
.title { height: 29px; flex: none; display: flex; align-items: center; padding-left: 3px; }
.title h1 { flex: 1; margin: 0; text-align: center; font-size: 15px; line-height: 20px; font-weight: 400; color: #222; padding-left: 80px; }
.winbtns { display: flex; align-self: flex-start; }
.winbtns button { width: 27px; height: 20px; display: grid; place-items: center; }
.winbtns .close { width: 45px; background: #c75050; }
.client { flex: 1; min-height: 0; border: 1px solid #d2d2d2; border-bottom: 0; background: #bfdbff; display: flex; flex-direction: column; }
.menubar { height: 25px; flex: none; display: flex; align-items: center; gap: 20px; padding-left: 13px; }

.bars { display: flex; flex: none; gap: 4px; height: 30px; padding-left: 1px; align-items: flex-start; }
.bars + .bars { height: 31px; padding-top: 1px; }
.bar { display: flex; align-items: center; height: 27px; background: linear-gradient(#e3efff, #d7e6fd 50%, #afd2ff); border-bottom: 1px solid #6f9dd9; border-radius: 3px; min-width: 0; }
.bar.tall { height: 30px; flex: none; }
.bar.fill { flex: 1; }
.grip { width: 2px; height: 20px; margin: 0 3px 0 2px; background: repeating-linear-gradient(#6f9dd9 0 2px, transparent 2px 6px); }
.tb { width: 24px; height: 25px; margin-right: 1px; display: grid; place-items: center; }
.tb.on { background: linear-gradient(#fdd283, #fcc252 50%, #ffd066); border: 1px solid #c2590b; }
.glyph { font: bold 14px/15px "Liberation Serif", serif; color: #858d9b; display: flex; align-items: center; }
.italic { font-style: italic; }
.under { font-size: 13px; text-decoration: underline; }
.fontcolor { font-size: 16px; padding: 0 2px; border-bottom: 2px solid #e8eef8; }
.format { font: 11px/15px "Liberation Sans", sans-serif; }
.sep { width: 1px; height: 21px; margin-right: 2px; background: #fff; }
.drop { width: 13px; height: 24px; display: grid; place-items: center; }
.tri { width: 0; height: 0; border: 3px solid transparent; border-top-color: #111; border-bottom: 0; }
.tri.gray { border-top-color: #8b94a3; }
.tri.blue { border-top-color: #1f4d94; }
.tri.up { border-top: 0; border-bottom: 3px solid #111; }
.combo { position: relative; flex: none; display: block; height: 23px; }
.combo select { appearance: none; width: 100%; height: 100%; padding: 0 3px; font: 12px Lato, sans-serif; color: #111; background: #eaf2fd; border: 1px solid #a9c4ea; border-radius: 0; display: block; }
.combo select:disabled { background: #efefef; opacity: 1; }
.combo .tri { position: absolute; right: 5px; top: 11px; }
.zoom { width: 70px; margin-left: 2px; }
.font { width: 130px; margin-right: 5px; margin-left: 2px; }
.size { width: 50px; margin-right: 3px; }
.fechar { color: #111; width: 68px; }
.cap { width: 11px; height: 100%; margin-left: auto; border-radius: 0 3px 3px 0; background: linear-gradient(#c3dafc, #7ba4e0 70%, #6793d6); display: flex; flex-direction: column; align-items: center; justify-content: flex-end; gap: 2px; padding-bottom: 4px; }
.texts .cap { margin-left: 5px; }
.cap .tri, .line { filter: drop-shadow(1px 1px 0 #fff); }
.fill .cap { width: 13px; }
.line { width: 5px; height: 1px; background: #111; }
.more { display: block; fill: #111; }
.fill .more { margin-bottom: 4px; }

.body { flex: 1; min-height: 0; display: flex; }
.toolbox { width: 29px; flex: none; display: flex; flex-direction: column; background: linear-gradient(#e3efff, #d9e8fe 50%, #a9cdff); padding: 3px 2px 0 1px; overflow: hidden; }
.hgrip { height: 2px; margin: 0 2px 4px 3px; background: repeating-linear-gradient(90deg, #6f9dd9 0 2px, transparent 2px 6px); }
.kb { width: 26px; height: 22px; margin-bottom: 1px; display: flex; flex-direction: column; align-items: center; justify-content: center; }
.kb.on { border: 1px solid #c2590b; background: linear-gradient(#fdd283, #fcc252 50%, #ffd066); }
.kb.more { height: 33px; margin: 0; gap: 4px; justify-content: flex-start; padding-top: 3px; }
.hsep { height: 1px; margin: 2px 0 1px; background: #fff; }
.side { width: 0; height: 0; border: 3px solid transparent; border-left: 4px solid #111; border-right: 0; }
.boxcap { margin-top: auto; height: 12px; background: linear-gradient(#a9c9f5, #6793d6); display: flex; flex-direction: column; align-items: center; gap: 2px; padding-top: 2px; }

.right { flex: 1; min-width: 0; display: flex; flex-direction: column; }
.work { flex: 1; min-height: 0; display: flex; gap: 4px; }
.center { flex: 1; min-width: 0; display: flex; flex-direction: column; }
.tabs { height: 24px; flex: none; display: flex; align-items: flex-end; background: linear-gradient(#e3efff, #b3d3ff); border-bottom: 1px solid #8ba6cf; padding-left: 1px; }
.tab { display: flex; position: relative; height: 22px; margin-right: -10px; }
.tabmain { display: flex; align-items: center; gap: 4px; height: 22px; padding: 0 5px 0 2px; border: 1px solid #8ba6cf; border-width: 1px 0 0 1px; border-radius: 6px 0 0 0; background: linear-gradient(#dce9fc, #b5d2fb); font-size: 11px; }
.tab.on { height: 23px; margin-bottom: -1px; }
.tab.on .tabmain { background: #fff; gap: 5px; height: 23px; border-radius: 4px 0 0 0; font-size: 12px; font-weight: 700; }
.tail { display: block; flex: none; height: 100%; }
.design { flex: 1; min-height: 0; display: grid; grid-template-columns: 21px minmax(0, 1fr) 17px; grid-template-rows: 21px minmax(0, 1fr) 16px; background: #9dbbe2; border-top: 1px solid #eef4fc; }
.rulerrow { grid-column: 1 / 4; padding: 4px 0 0 31px; overflow: hidden; }
.hruler, .vruler { display: block; font: 10px "Liberation Sans", sans-serif; fill: #555; }
.vcol { grid-row: 2 / 4; padding: 10px 0 0 4px; overflow: hidden; }
.vruler { height: 100%; }
.canvas { background: #97b4dd; padding: 10px 0 0 10px; overflow: hidden; }
.paper { height: 100%; background: #fff; border: 1px solid #000; border-width: 1px 0 0 1px; padding: 28px 0 0 28px; overflow: hidden; }
.mesh { display: block; height: 100%; }
.vscroll { background: #f3f3f3; display: flex; flex-direction: column; align-items: center; padding: 6px 0; border-left: 1px solid #fff; }
.vscroll .tri { border-width: 5px; border-top: 0; border-bottom-color: #4b5c86; }
.vscroll .tri.dn { border-top: 5px solid #4b5c86; border-bottom: 0; margin-top: auto; }
.vthumb { width: 14px; height: 88px; margin-top: 7px; border: 1px solid #5a6a92; border-radius: 2px; background: linear-gradient(90deg, #eef1f6 50%, #c8d1e0 55%); display: grid; place-items: center; }
.vthumb i { width: 9px; height: 7px; background: repeating-linear-gradient(#7d879a 0 1px, transparent 1px 2px); }
.hscroll { background: #f3f3f3; display: flex; align-items: center; padding: 0 7px; }
.lf { width: 0; height: 0; border: 5px solid transparent; border-right: 5px solid #4b5c86; border-left: 0; }
.rt { border-width: 5px; border-left: 5px solid #4b5c86; margin-left: 21px; }
.hthumb { flex: 1; height: 14px; margin-left: 7px; border: 1px solid #5a6a92; border-radius: 2px; background: linear-gradient(#eef1f6 50%, #c8d1e0 55%); display: grid; place-items: center; }
.hthumb i { width: 9px; height: 7px; background: repeating-linear-gradient(90deg, #7d879a 0 1px, transparent 1px 2px); }
.corner { background: #eee; }

.panel { width: 318px; flex: none; position: relative; display: flex; flex-direction: column; }
.ptitle { height: 20px; flex: none; display: flex; align-items: center; gap: 9px; padding: 0 5px 0 6px; background: linear-gradient(#648fcb, #3a66a4); color: #fff; }
.ptitle h2 { font-size: 12px; line-height: 16px; font-weight: 400; margin: 0; flex: 1; }
.ptitle button { display: grid; place-items: center; }
.ptools { height: 28px; flex: none; display: flex; align-items: center; padding-left: 11px; background: linear-gradient(#e3efff, #cfe1fc 50%, #b3d3ff); border-bottom: 1px solid #6f9dd9; }
.ptools .acoes { width: 37px; text-align: left; }
.ptools .tb { margin: 0; }
.ptools .tb.az { display: flex; align-items: center; justify-content: center; gap: 2px; }
.azl b { display: block; font: bold 9px/8px "Liberation Sans", sans-serif; color: #3a5a9c; }
.azl b + b { color: #a02828; }
.treebox { flex: 1; min-height: 0; margin: 0 3px 0 2px; background: #fff; border: 1px solid #7d8fa9; overflow: hidden; position: relative; color: #111; }
.twigs { position: absolute; left: 0; top: 0; }
.treebox ul { list-style: none; margin: 1px 0 0; padding: 0; position: relative; }
.treebox li { display: flex; align-items: center; height: 18px; padding-left: 8px; white-space: nowrap; }
.treebox li.d1 { padding-left: 27px; }
.treebox li.d2 { padding-left: 46px; }
.exp { display: grid; }
.dots { width: 6px; height: 1px; background: repeating-linear-gradient(90deg, #777 0 1px, transparent 1px 2px); }
.fx { font: italic bold 13px/16px "Liberation Serif", serif; text-align: center; color: #222c48; }
.sigma { font: 14px/16px "Liberation Serif", serif; text-align: center; }
.treebox span { margin-left: 3px; padding: 0 2px; line-height: 18px; }
.sel { background: #3399ff; color: #fff; }
.opts { flex: none; padding: 1px 0 4px 5px; }
.opts label { display: flex; align-items: center; gap: 6px; height: 16px; }
.opts input { appearance: none; width: 13px; height: 13px; margin: 0; border: 1px solid #8fa5c4; background: linear-gradient(135deg, #d8e2ee, #fff); position: relative; }
.opts input::after { content: ""; position: absolute; left: 3px; top: 0; width: 5px; height: 8px; border: solid #40598a; border-width: 0 2px 2px 0; transform: rotate(40deg); }
.dock { height: 24px; flex: none; display: flex; gap: 2px; padding-left: 5px; border-top: 1px solid #8ba6cf; background: linear-gradient(#e3efff, #b9d6ff); }
.dock button { display: flex; align-items: center; gap: 2px; height: 21px; padding: 0 5px 0 3px; border: 1px solid #8ba6cf; border-top: 0; border-radius: 0 0 5px 5px; background: linear-gradient(#dce9fc, #bdd6fa); box-shadow: inset 0 -1px #fff; }
.dock .on { background: #fff; }

.ctx { position: absolute; left: 84px; top: 113px; width: 195px; padding: 1px 1px 2px 2px; border: 1px solid #868686; border-radius: 3px; background: linear-gradient(90deg, #e9eeee 22px, #c5c5c5 22px 23px, #fafafa 23px); box-shadow: 2px 2px 1px rgba(60, 60, 60, .5); display: flex; flex-direction: column; z-index: 20; }
.ctx button { height: 22px; display: flex; align-items: center; gap: 15px; padding-left: 1px; border: 1px solid transparent; border-radius: 2px; }
.ctx .on { border-color: #d6b35c; background: linear-gradient(#fffbdc, #ffe795 45%, #ffd444 46%, #ffe48a); }
.ctx button:disabled { color: #8d8d8d; }
.csep { height: 1px; margin: 1px 0 1px 30px; background: #c5c5c5; }

.messages { height: 26px; flex: none; border-bottom: 1px solid #6d91cd; background: linear-gradient(#e3efff, #a9cdff); padding: 1px 0 0 2px; color: #111; }
.messages button { height: 24px; display: flex; align-items: center; gap: 4px; padding: 0 5px 0 2px; border: 1px solid #7fa3dc; border-bottom: 0; border-radius: 3px 3px 0 0; background: linear-gradient(#e8f2ff, #b9d6ff); }
.status { height: 27px; flex: none; display: flex; align-items: center; background: linear-gradient(#d7e6fa 8px, #bcd4f5 9px, #cbe0fb); padding-left: 1px; }
.units { color: #111; display: flex; align-items: center; gap: 9px; margin: 0 6px 0 8px; }
.status .sep { height: 17px; margin: 0 6px; }
.status .units + .sep { margin: 0 4px 0 0; }
</style>
